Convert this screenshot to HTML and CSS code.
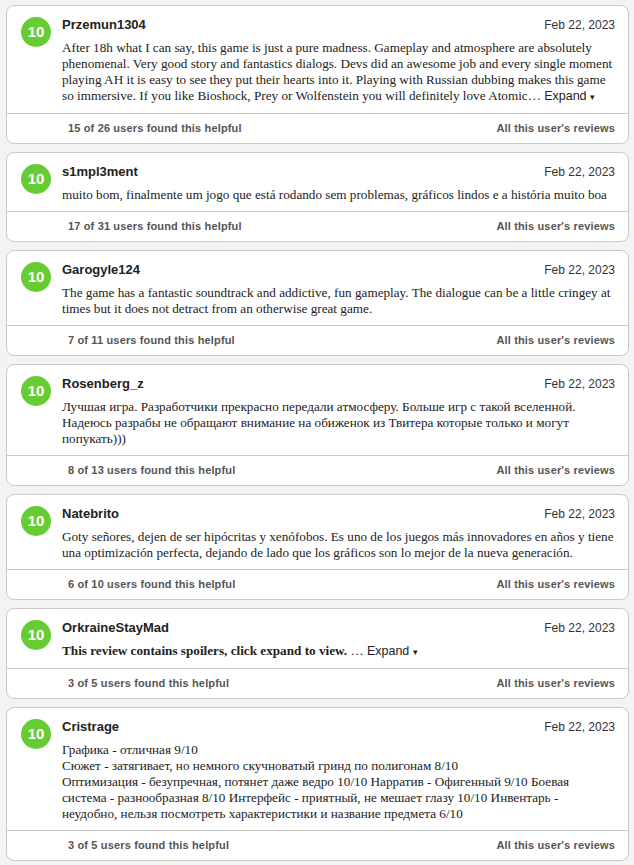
FILE: index.html
```html
<!DOCTYPE html>
<html lang="en">
<head>
<meta charset="UTF-8">
<meta name="viewport" content="width=device-width, initial-scale=1.0">
<title>User Reviews</title>
<link rel="stylesheet" href="styles.css">
</head>
<body>
<div class="reviews">

    <div class="review">
        <div class="review-main">
            <div class="score">10</div>
            <div class="review-content">
                <div class="review-head">
                    <span class="author">Przemun1304</span>
                    <span class="date">Feb 22, 2023</span>
                </div>
                <div class="review-body">After 18h what I can say, this game is just a pure madness. Gameplay and atmosphere are absolutely phenomenal. Very good story and fantastics dialogs. Devs did an awesome job and every single moment playing AH it is easy to see they put their hearts into it. Playing with Russian dubbing makes this game so immersive. If you like Bioshock, Prey or Wolfenstein you will definitely love Atomic&hellip; <span class="expand">Expand <span class="caret">&#9662;</span></span></div>
            </div>
        </div>
        <div class="review-foot">
            <span>15 of 26 users found this helpful</span>
            <span>All this user's reviews</span>
        </div>
    </div>

    <div class="review">
        <div class="review-main">
            <div class="score">10</div>
            <div class="review-content">
                <div class="review-head">
                    <span class="author">s1mpl3ment</span>
                    <span class="date">Feb 22, 2023</span>
                </div>
                <div class="review-body">muito bom, finalmente um jogo que está rodando sem problemas, gráficos lindos e a história muito boa</div>
            </div>
        </div>
        <div class="review-foot">
            <span>17 of 31 users found this helpful</span>
            <span>All this user's reviews</span>
        </div>
    </div>

    <div class="review">
        <div class="review-main">
            <div class="score">10</div>
            <div class="review-content">
                <div class="review-head">
                    <span class="author">Garogyle124</span>
                    <span class="date">Feb 22, 2023</span>
                </div>
                <div class="review-body">The game has a fantastic soundtrack and addictive, fun gameplay. The dialogue can be a little cringey at times but it does not detract from an otherwise great game.</div>
            </div>
        </div>
        <div class="review-foot">
            <span>7 of 11 users found this helpful</span>
            <span>All this user's reviews</span>
        </div>
    </div>

    <div class="review">
        <div class="review-main">
            <div class="score">10</div>
            <div class="review-content">
                <div class="review-head">
                    <span class="author">Rosenberg_z</span>
                    <span class="date">Feb 22, 2023</span>
                </div>
                <div class="review-body">Лучшая игра. Разработчики прекрасно передали атмосферу. Больше игр с такой вселенной. Надеюсь разрабы не обращают внимание на обиженок из Твитера которые только и могут попукать)))</div>
            </div>
        </div>
        <div class="review-foot">
            <span>8 of 13 users found this helpful</span>
            <span>All this user's reviews</span>
        </div>
    </div>

    <div class="review">
        <div class="review-main">
            <div class="score">10</div>
            <div class="review-content">
                <div class="review-head">
                    <span class="author">Natebrito</span>
                    <span class="date">Feb 22, 2023</span>
                </div>
                <div class="review-body">Goty señores, dejen de ser hipócritas y xenófobos. Es uno de los juegos más innovadores en años y tiene una optimización perfecta, dejando de lado que los gráficos son lo mejor de la nueva generación.</div>
            </div>
        </div>
        <div class="review-foot">
            <span>6 of 10 users found this helpful</span>
            <span>All this user's reviews</span>
        </div>
    </div>

    <div class="review">
        <div class="review-main">
            <div class="score">10</div>
            <div class="review-content">
                <div class="review-head">
                    <span class="author">OrkraineStayMad</span>
                    <span class="date">Feb 22, 2023</span>
                </div>
                <div class="review-body"><b>This review contains spoilers, click expand to view.</b> &hellip; <span class="expand">Expand <span class="caret">&#9662;</span></span></div>
            </div>
        </div>
        <div class="review-foot">
            <span>3 of 5 users found this helpful</span>
            <span>All this user's reviews</span>
        </div>
    </div>

    <div class="review">
        <div class="review-main">
            <div class="score">10</div>
            <div class="review-content">
                <div class="review-head">
                    <span class="author">Cristrage</span>
                    <span class="date">Feb 22, 2023</span>
                </div>
                <div class="review-body">Графика - отличная 9/10<br>Сюжет - затягивает, но немного скучноватый гринд по полигонам 8/10<br>Оптимизация - безупречная, потянет даже ведро 10/10 Нарратив - Офигенный 9/10 Боевая система - разнообразная 8/10 Интерфейс - приятный, не мешает глазу 10/10 Инвентарь - неудобно, нельзя посмотреть характеристики и название предмета 6/10</div>
            </div>
        </div>
        <div class="review-foot">
            <span>3 of 5 users found this helpful</span>
            <span>All this user's reviews</span>
        </div>
    </div>

</div>
</body>
</html>
```

FILE: styles.css
```css
body {
    margin: 0;
    background-color: #f3f3f3;
    font-family: "Liberation Sans", Arial, sans-serif;
    color: #222;
}
.reviews {
    padding: 5px 5px 0 6px;
}
.review {
    background-color: #fff;
    border: 1px solid #c8c8c8;
    border-radius: 8px;
    margin-bottom: 8px;
}
.review-main {
    display: flex;
    gap: 11px;
    padding: 10px 13px 8px 14px;
}
.score {
    flex: none;
    width: 30px;
    height: 30px;
    margin-top: 1px;
    border-radius: 50%;
    background-color: #66cc33;
    color: #fff;
    font-weight: bold;
    font-size: 15px;
    line-height: 30px;
    text-align: center;
}
.review-content {
    flex: 1;
}
.review-head {
    display: flex;
    justify-content: space-between;
    line-height: 18px;
}
.author {
    font-size: 13px;
    font-weight: bold;
}
.date {
    font-size: 12px;
    color: #333;
}
.review-body {
    margin-top: 6px;
    font-family: "Liberation Serif", "Times New Roman", serif;
    font-size: 13.2px;
    line-height: 16px;
    color: #222;
}
.expand {
    font-family: "Liberation Sans", Arial, sans-serif;
    font-size: 12.5px;
    color: #222;
}
.caret {
    font-size: 9px;
}
.review-foot {
    display: flex;
    justify-content: space-between;
    border-top: 1px solid #c8c8c8;
    padding: 0 13px 0 61px;
    line-height: 29px;
    font-size: 11px;
    font-weight: bold;
    letter-spacing: 0.15px;
    color: #555;
}
```
